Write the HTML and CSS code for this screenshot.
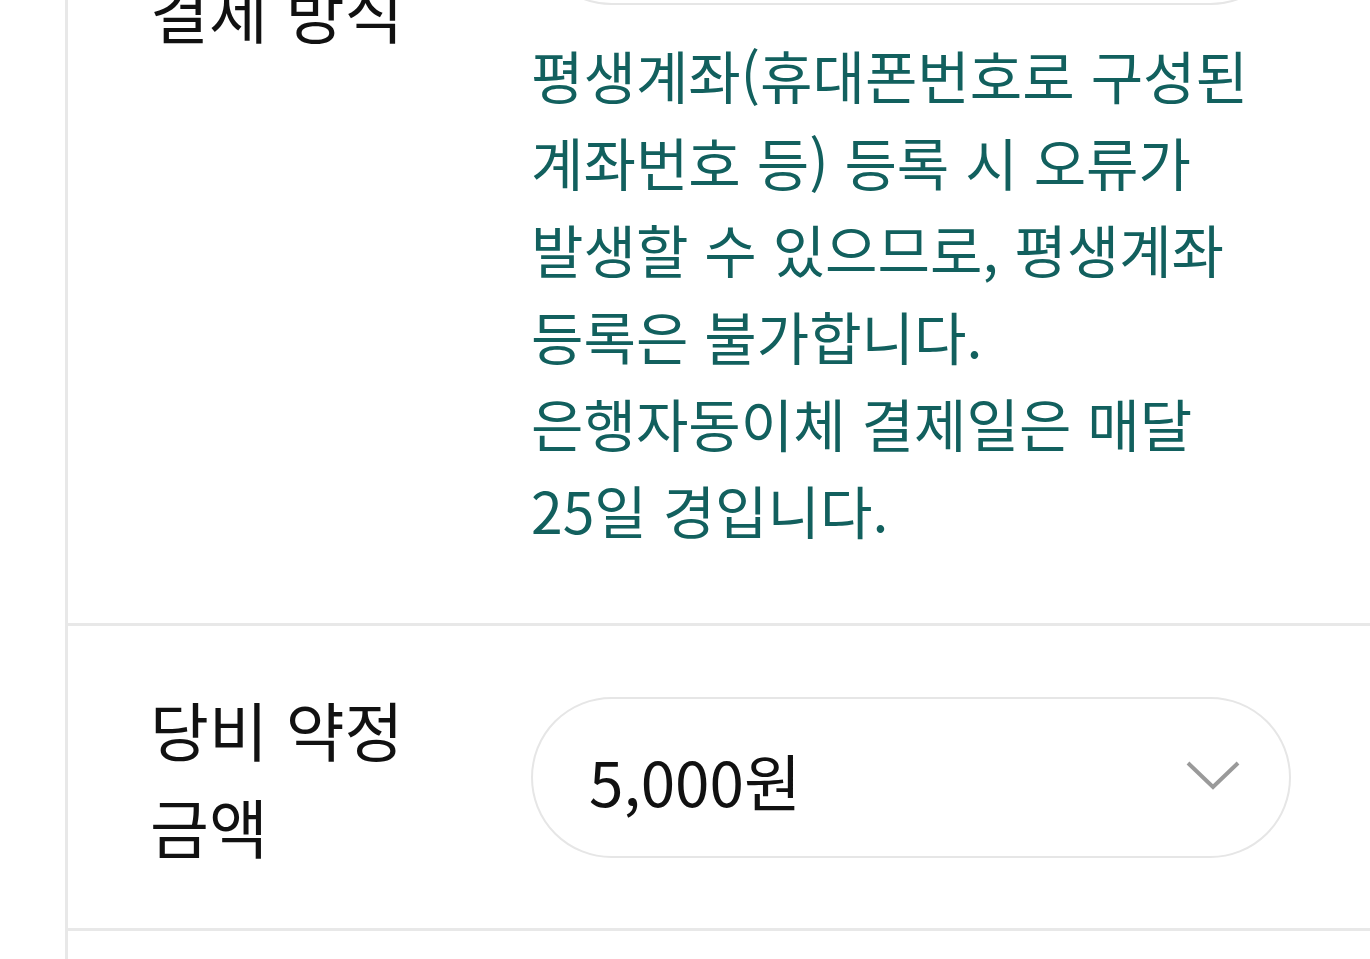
FILE: index.html
```html
<!DOCTYPE html>
<html lang="ko">
<head>
    <meta charset="UTF-8">
    <meta name="viewport" content="width=device-width, initial-scale=1.0">
    <title>당비 납부 신청</title>
    <link rel="stylesheet" href="styles.css">
</head>
<body>
    <div class="form">
        <div class="row row-pay">
            <div class="label">결제 방식</div>
            <div class="field">
                <div class="select">
                    <span class="select-value">은행자동이체</span>
                </div>
                <p class="note">평생계좌(휴대폰번호로 구성된 계좌번호 등) 등록 시 오류가 발생할 수 있으므로, 평생계좌 등록은 불가합니다.<br>은행자동이체 결제일은 매달 25일 경입니다.</p>
            </div>
        </div>

        <div class="row row-amount">
            <div class="label">당비 약정<br>금액</div>
            <div class="field">
                <div class="select">
                    <span class="select-value">5,000원</span>
                    <svg class="chevron" width="56" height="32" viewBox="0 0 56 32">
                        <polyline points="3,4 28,28 53,4" fill="none" stroke="#9a9a9a" stroke-width="4"/>
                    </svg>
                </div>
            </div>
        </div>

        <div class="row row-next"></div>
    </div>
</body>
</html>
```

FILE: styles.css
```css
body {
    margin: 0;
    background: #fff;
    font-family: "Noto Sans CJK KR", "Noto Sans", sans-serif;
    color: #111;
    overflow: hidden;
}
.form {
    margin-top: -200px;
    margin-left: 65px;
    border-left: 3px solid #e8e8e8;
}
.row {
    display: flex;
    align-items: flex-start;
    padding: 44px 79px 0 82px;
    border-bottom: 3px solid #e8e8e8;
}
.label {
    width: 381px;
    flex-shrink: 0;
    font-size: 64px;
    line-height: 97px;
}
.field {
    flex: 1;
}
.select {
    display: flex;
    align-items: center;
    justify-content: space-between;
    height: 157px;
    padding: 0 48px 0 56px;
    border: 2px solid #e6e6e6;
    border-radius: 81px;
}
.select-value {
    font-size: 62px;
    padding-top: 6px;
}
.chevron {
    display: block;
    margin-top: -4px;
}
.note {
    margin: 26px 0 0;
    color: #12605e;
    font-size: 57px;
    line-height: 87px;
    word-break: keep-all;
}

/* row 1 */
.row-pay {
    padding-bottom: 70px;
}
.row-pay .label {
    padding-top: 118px;
}
.row-pay .select-value {
    visibility: hidden;
}

/* row 2 */
.row-amount {
    align-items: center;
    height: 305px;
    padding-top: 0;
    box-sizing: border-box;
}

.row-next {
    height: 120px;
    border-bottom: none;
}
```
